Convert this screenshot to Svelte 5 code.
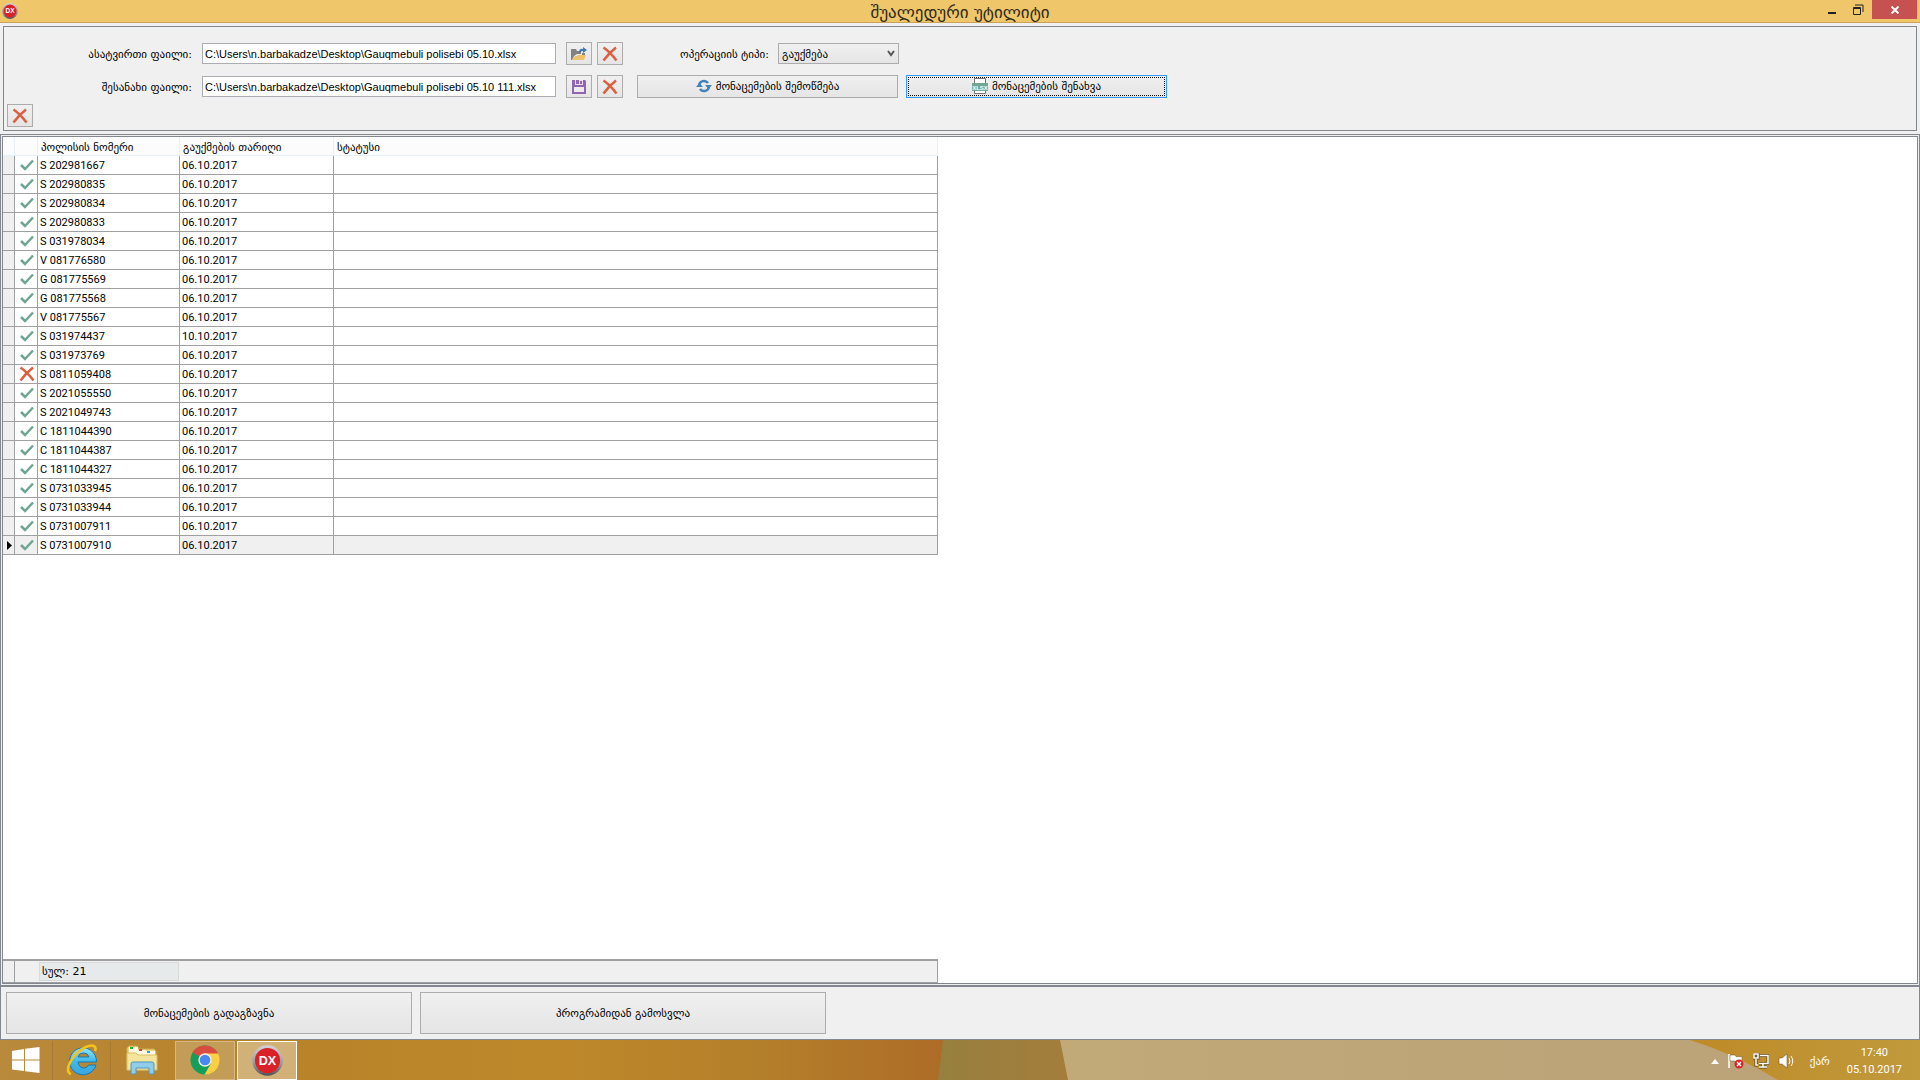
<script lang="ts">
	type Policy = { number: string; date: string; ok: boolean };

	const numbers = [
		'S 202981667',
		'S 202980835',
		'S 202980834',
		'S 202980833',
		'S 031978034',
		'V 081776580',
		'G 081775569',
		'G 081775568',
		'V 081775567',
		'S 031974437',
		'S 031973769',
		'S 0811059408',
		'S 2021055550',
		'S 2021049743',
		'C 1811044390',
		'C 1811044387',
		'C 1811044327',
		'S 0731033945',
		'S 0731033944',
		'S 0731007911',
		'S 0731007910'
	];

	const policies: Policy[] = numbers.map((number) => ({
		number,
		date: number === 'S 031974437' ? '10.10.2017' : '06.10.2017',
		ok: number !== 'S 0811059408'
	}));

	let selected = $state(policies.length - 1);
	let loadPath = $state('C:\\Users\\n.barbakadze\\Desktop\\Gauqmebuli polisebi 05.10.xlsx');
	let savePath = $state('C:\\Users\\n.barbakadze\\Desktop\\Gauqmebuli polisebi 05.10 111.xlsx');
</script>

{#snippet cross()}
	<svg class="cross" viewBox="0 0 16 16" aria-hidden="true">
		<path d="M1.5 1.5Q8 6 14.5 14.5M14 1.5Q7 7 1.5 14.5" />
	</svg>
{/snippet}

{#snippet dx()}
	<svg class="dx" viewBox="0 0 32 32" aria-hidden="true">
		<defs>
			<linearGradient id="ring" x1="0" y1="0" x2="0" y2="1">
				<stop offset="0" stop-color="#d4d4d8" />
				<stop offset="0.6" stop-color="#98989d" />
				<stop offset="1" stop-color="#505055" />
			</linearGradient>
		</defs>
		<circle cx="16" cy="16" r="15.8" fill="url(#ring)" />
		<circle cx="16" cy="16" r="13" fill="#da2128" />
		<text x="16" y="20.5" text-anchor="middle">DX</text>
	</svg>
{/snippet}

<div class="window">
	<header class="titlebar">
		<span class="app-icon">{@render dx()}</span>
		<h1>შუალედური უტილიტი</h1>
		<div class="window-buttons">
			<button aria-label="Minimize">
				<svg width="10" height="14" viewBox="0 0 10 14"><path d="M1 9h8v2H1z" fill="#222" /></svg>
			</button>
			<button aria-label="Restore">
				<svg width="12" height="12" viewBox="0 0 12 12" fill="none" stroke="#222">
					<path d="M1.5 3.5h7v7h-7zM1 4.5h8" />
					<path d="M3 1h8v7" />
				</svg>
			</button>
			<button class="close" aria-label="Close">
				<svg width="10" height="8" viewBox="0 0 10 8"><path d="M1.5 .5l7 7M8.5 .5l-7 7" stroke="#fff" stroke-width="2" /></svg>
			</button>
		</div>
	</header>

	<section class="options">
		<div class="line">
			<div class="file">
				<label for="load">ასატვირთი ფაილი:</label>
				<input id="load" type="text" bind:value={loadPath} />
				<div class="tools">
					<button class="tool" aria-label="Open">
						<svg width="16" height="14" viewBox="0 0 16 14">
							<path d="M0 2h5l1 2h4v3H6l-3 2-2 4H0z" fill="#828282" />
							<path d="M11 6h3v2h-3z" fill="#828282" />
							<path d="M4 9h2l1-1h8l-2 5H1z" fill="#eec26c" />
							<path d="M8 6q0-5 4-4V0l4 3-4 3V4q-2 0-4 2z" fill="#3e7ab8" />
						</svg>
					</button>
					<button class="tool" aria-label="Clear" onclick={() => (loadPath = '')}>{@render cross()}</button>
				</div>
			</div>
			<div class="operation">
				<label for="type">ოპერაციის ტიპი:</label>
				<div class="select">
					<select id="type">
						<option>გაუქმება</option>
					</select>
					<svg width="8" height="7" viewBox="0 0 8 7"><path d="M1 1l3 4 3-4" fill="none" stroke="#555" stroke-width="2" /></svg>
				</div>
			</div>
		</div>

		<div class="line">
			<div class="file">
				<label for="save">შესანახი ფაილი:</label>
				<input id="save" type="text" bind:value={savePath} />
				<div class="tools">
					<button class="tool" aria-label="Save">
						<svg width="14" height="14" viewBox="0 0 14 14">
							<path d="M0 0h13l1 1v13H0z" fill="#9265b0" />
							<path d="M3 0h8v5H3z" fill="#e6dcec" />
							<path d="M4 0h3v4H4zM8 1h2v3H8z" fill="#9265b0" />
							<path d="M2 7h10v5H2z" fill="#ececec" />
						</svg>
					</button>
					<button class="tool" aria-label="Clear" onclick={() => (savePath = '')}>{@render cross()}</button>
				</div>
			</div>
			<div class="actions">
				<button>
					<svg width="16" height="14" viewBox="0 0 16 14">
						<path d="M3 6.500a5 5 0 0 1 9-2.500M13 7.500a5 5 0 0 1-9 2.500" fill="none" stroke="#4381bd" stroke-width="2.5" />
						<path d="M9 6h7l-3.500 4zM0 8h7L3.500 4z" fill="#4381bd" />
					</svg>
					მონაცემების შემოწმება
				</button>
				<button class="focused">
					<svg width="16" height="16" viewBox="0 0 16 16">
						<path d="M2.5 .5h11v15h-11z" fill="#fff" stroke="#777" />
						<path d="M0 5h16v8H0z" fill="#72a794" />
						<text x="8" y="11.500" text-anchor="middle" fill="#fff" font-size="6">XLSX</text>
					</svg>
					მონაცემების შენახვა
				</button>
			</div>
		</div>

		<button class="tool" aria-label="Cancel">{@render cross()}</button>
	</section>

	<main>
		<div class="grid">
			<table>
				<colgroup>
					<col class="c-mark" />
					<col class="c-state" />
					<col class="c-number" />
					<col class="c-date" />
					<col class="c-status" />
				</colgroup>
				<thead>
					<tr>
						<th></th>
						<th></th>
						<th>პოლისის ნომერი</th>
						<th>გაუქმების თარიღი</th>
						<th>სტატუსი</th>
					</tr>
				</thead>
				<tbody>
					{#each policies as policy, i}
						<tr class:current={i === selected} onclick={() => (selected = i)}>
							<td class="mark">
								{#if i === selected}
									<svg width="5" height="9" viewBox="0 0 5 9"><path d="M0 0l5 4.5-5 4.5z" /></svg>
								{/if}
							</td>
							<td class="state">
								{#if policy.ok}
									<svg class="tick" width="14" height="12" viewBox="0 0 14 12"><path d="M1 6l4 4 8-8.5" /></svg>
								{:else}
									{@render cross()}
								{/if}
							</td>
							<td class="number">{policy.number}</td>
							<td>{policy.date}</td>
							<td></td>
						</tr>
					{/each}
				</tbody>
			</table>

			<div class="summary">
				<div class="corner"></div>
				<div class="total">სულ: {policies.length}</div>
			</div>
		</div>
	</main>

	<footer>
		<button>მონაცემების გადაგზავნა</button>
		<button>პროგრამიდან გამოსვლა</button>
	</footer>

	<nav class="taskbar">
		<svg class="wallpaper" viewBox="0 0 1920 40" preserveAspectRatio="none" aria-hidden="true">
			<defs>
				<linearGradient id="wood">
					<stop offset="0" stop-color="#b98a3c" />
					<stop offset="0.25" stop-color="#b88229" />
					<stop offset="0.6" stop-color="#bd872a" />
					<stop offset="0.8" stop-color="#b47f2a" />
					<stop offset="1" stop-color="#ad6b27" />
				</linearGradient>
				<linearGradient id="olive">
					<stop offset="0" stop-color="#97803f" />
					<stop offset="1" stop-color="#a47d3b" />
				</linearGradient>
				<linearGradient id="sand">
					<stop offset="0" stop-color="#c2a978" />
					<stop offset="1" stop-color="#bba278" />
				</linearGradient>
				<linearGradient id="gold">
					<stop offset="0" stop-color="#bf8a27" />
					<stop offset="1" stop-color="#c09a3c" />
				</linearGradient>
			</defs>
			<path d="M0 0h950v40H0z" fill="url(#wood)" />
			<path d="M943 0h130v40H938z" fill="url(#olive)" />
			<path d="M1060 0h740v40h-732z" fill="url(#sand)" />
			<path d="M1690 0h230v40h-142Q1735 14 1690 0z" fill="url(#gold)" />
		</svg>

		<div class="apps">
			<button class="start" aria-label="Start">
				<svg width="28" height="26" viewBox="0 0 28 26" fill="#fff">
					<path d="M0 4l12-2v10.5H0zM13 1.8L27.5 0v12.5H13zM0 13.5h12V24L0 22.5zM13 13.5h14.5V26L13 24.2z" />
				</svg>
			</button>
			<button aria-label="Internet Explorer">
				<svg width="32" height="32" viewBox="0 0 32 32">
					<defs>
						<linearGradient id="ie" x1="0" y1="0" x2="0" y2="1">
							<stop offset="0" stop-color="#8fe6fb" />
							<stop offset="0.5" stop-color="#3db9ea" />
							<stop offset="1" stop-color="#3ba6df" />
						</linearGradient>
					</defs>
					<path d="M30 21A13.5 13.5 0 1 1 30.5 18H12q1 6 6 6 3 0 4.5-3zM12 13h11q-1-4-5.5-4T12 13z" fill="url(#ie)" stroke="#1878ae" />
					<path d="M5 30C-3 28 6 9 20 3c7-3 11-1 9 4" fill="none" stroke="#f6c31c" stroke-width="2.5" />
				</svg>
			</button>
			<button class="explorer" aria-label="File Explorer">
				<svg width="32" height="30" viewBox="0 0 32 30">
					<path d="M1 3l2-2h8l2 3h15l2 2v19H1z" fill="#eed580" stroke="#cba84b" />
					<path d="M3 2h9v3h8v1h9v4H3z" fill="#fffbe2" />
					<path d="M4 2h3v2H4z" fill="#1db32a" />
					<path d="M13 4h3v2h-3z" fill="#d2442c" />
					<path d="M21 6h3v2h-3z" fill="#2f9cd8" />
					<path d="M1 8h9l2 2h19v15H1z" fill="#f5e49b" stroke="#d9bd66" />
					<path d="M5 29V19q0-2 2-2h19q2 0 2 2v10h-5v-6H10v6z" fill="#8fcdeb" stroke="#4a98c4" />
				</svg>
			</button>
			<button class="running" aria-label="Chrome">
				<svg width="30" height="30" viewBox="0 0 30 30">
					<circle cx="15" cy="15" r="14.5" fill="#159e5a" />
					<path d="M15 15L2.5 7.5A14.5 14.5 0 0 1 28 8.5z" fill="#d94c40" />
					<path d="M15 8.5h13.2A14.5 14.5 0 0 1 14.5 29.5l6.5-11z" fill="#fdcd42" />
					<circle cx="15" cy="15" r="6.7" fill="#f4f1e9" />
					<circle cx="15" cy="15" r="5.3" fill="#4a87ee" />
				</svg>
			</button>
			<button class="running active" aria-label="DX">{@render dx()}</button>
		</div>

		<div class="tray">
			<svg width="8" height="5" viewBox="0 0 8 5"><path d="M0 5l4-5 4 5z" fill="#fff" /></svg>
			<svg width="16" height="16" viewBox="0 0 16 16">
				<path d="M1 1v14" stroke="#fff" stroke-width="1.5" />
				<path d="M2 2h5l1 1.5h6V9H8L7 8H2z" fill="#fff" stroke="#6b5318" stroke-width=".5" />
				<circle cx="11" cy="11" r="4.5" fill="#d8232a" />
				<path d="M9 9l4 4M13 9l-4 4" stroke="#fff" stroke-width="1.5" />
			</svg>
			<svg width="16" height="16" viewBox="0 0 16 16" fill="none">
				<path d="M7 2.5h8v8H6M10 10v4M6 14h8M3 6v6h2M1 1h4v4H1z" stroke="#5e4a1c" stroke-width="3" />
				<path d="M7 2.5h8v8H6M10 10v4M6 14h8M3 6v6h2M1 1h4v4H1z" stroke="#fff" stroke-width="1.5" />
			</svg>
			<svg width="17" height="16" viewBox="0 0 17 16">
				<path d="M1 5h3l5-4v14l-5-4H1z" fill="#fff" stroke="#5e4a1c" stroke-width=".5" />
				<path d="M11 5q2 3 0 6M13 3q3.5 5 0 10" fill="none" stroke="#fff" />
			</svg>
			<span class="lang">ქარ</span>
			<time class="clock"><span>17:40</span><span>05.10.2017</span></time>
		</div>
	</nav>
</div>

<style>
	:global(body) {
		background: #f0f0f0;
	}

	.window {
		display: flex;
		flex-direction: column;
		min-height: 100vh;
		background: #f0f0f0;
		color: #000;
		font: 11px/15px 'DejaVu Sans', sans-serif;
	}

	.window * {
		box-sizing: border-box;
	}

	button,
	input,
	select {
		margin: 0;
		padding: 0;
		border: 0;
		border-radius: 0;
		color: inherit;
		font: inherit;
	}

	svg {
		display: block;
		flex: none;
	}

	/* title bar */
	.titlebar {
		display: grid;
		grid-template-columns: 1fr auto 1fr;
		height: 23px;
		border-bottom: 1px solid #c9a458;
		background: #efc76a;
	}

	.app-icon {
		padding: 3px 2px;
	}

	.app-icon .dx {
		width: 16px;
		height: 16px;
	}

	h1 {
		margin: 0;
		color: #2e2a1c;
		font: 17px/24px 'DejaVu Sans', sans-serif;
	}

	.window-buttons {
		display: flex;
		justify-content: flex-end;
		padding-right: 3px;
	}

	.window-buttons button {
		display: flex;
		justify-content: center;
		align-items: center;
		width: 26px;
		height: 19px;
		background: none;
	}

	.window-buttons .close {
		width: 45px;
		margin-left: 1px;
		background: #c75050;
	}

	.dx text {
		fill: #fff;
		font: bold 13px 'Liberation Sans', sans-serif;
	}

	/* file and operation options */
	.options {
		display: flex;
		flex-direction: column;
		gap: 10px;
		margin: 3px;
		padding: 15px 3px 3px;
		border: 1px solid #828790;
	}

	.line,
	.file,
	.tools,
	.operation,
	.actions {
		display: flex;
		align-items: center;
	}

	.line {
		gap: 14px;
	}

	.file {
		gap: 10px;
	}

	.operation {
		gap: 9px;
	}

	.file label {
		width: 185px;
		text-align: right;
	}

	.file input {
		width: 354px;
		height: 21px;
		padding: 0 2px;
		border: 1px solid #abadb3;
		background: #fff;
		font-family: 'Liberation Sans', sans-serif;
	}

	label {
		padding-top: 1px;
	}

	.tools {
		gap: 5px;
	}

	.tool,
	.actions button,
	footer button,
	select {
		border: 1px solid #acacac;
		background: linear-gradient(#f0f0f0, #e5e5e5);
	}

	.tool {
		display: flex;
		justify-content: center;
		align-items: center;
		width: 26px;
		height: 23px;
	}

	.options > .tool {
		margin-top: -4px;
	}

	.cross {
		width: 16px;
		height: 16px;
		fill: none;
		stroke: #dc5f3f;
		stroke-width: 2.5;
	}

	.operation label {
		width: 132px;
		text-align: right;
	}

	.select {
		position: relative;
	}

	.select svg {
		position: absolute;
		top: 7px;
		right: 4px;
		pointer-events: none;
	}

	select {
		width: 121px;
		height: 21px;
		padding: 1px 0 0 3px;
		appearance: none;
	}

	.actions {
		gap: 8px;
	}

	.actions button {
		display: flex;
		justify-content: center;
		align-items: center;
		gap: 4px;
		width: 261px;
		height: 23px;
		padding-bottom: 1px;
	}

	.actions .focused {
		border-color: #3399ff;
		outline: 1px dotted #000;
		outline-offset: -3px;
	}

	.actions text {
		font-family: 'Liberation Sans', sans-serif;
		font-weight: bold;
	}

	/* policy grid */
	main {
		display: flex;
		flex: 1;
		padding: 1px;
		border: 1px solid #828790;
	}

	.grid {
		display: flex;
		flex: 1;
		flex-direction: column;
		justify-content: space-between;
		align-items: flex-start;
		border: 1px solid #828790;
		background: #fff;
	}

	table {
		width: 935px;
		border-spacing: 0;
		table-layout: fixed;
	}

	.c-mark {
		width: 12px;
	}

	.c-state {
		width: 23px;
	}

	.c-number {
		width: 142px;
	}

	.c-date {
		width: 154px;
	}

	th {
		height: 19px;
		padding: 2px 3px 0;
		border-right: 1px solid #e5f0f8;
		border-bottom: 1px solid #e5f0f8;
		background: #fcfcfc;
		font-weight: normal;
		text-align: left;
	}

	td {
		height: 19px;
		padding: 1px 0 0 2px;
		border-right: 1px solid #a0a0a0;
		border-bottom: 1px solid #a0a0a0;
		font-family: Roboto, sans-serif;
		line-height: 17px;
	}

	.mark {
		background: #f0f0f0;
	}

	.mark svg {
		margin-left: 2px;
	}

	.state {
		padding: 0 0 0 1px;
	}

	.state svg {
		margin: 0 auto;
	}

	.tick {
		fill: none;
		stroke: #6fa594;
		stroke-width: 2.5;
	}

	.current td {
		background: #f0f0f0;
	}

	.current .number {
		background: #fff;
	}

	.summary {
		display: flex;
		width: 935px;
		height: 24px;
		border: solid #a0a0a0;
		border-width: 2px 1px 1px 0;
		background: #f0f0f0;
	}

	.corner {
		width: 12px;
		border-right: 1px solid #a0a0a0;
	}

	.total {
		width: 140px;
		margin: 1px 0 1px 24px;
		padding-left: 2px;
		border: 1px solid #d8dadb;
		background: #e6eaeb;
		line-height: 18px;
	}

	/* bottom buttons */
	footer {
		display: flex;
		gap: 8px;
		padding: 5px;
		border: 1px solid #828790;
	}

	footer button {
		width: 406px;
		height: 42px;
	}

	/* taskbar */
	.taskbar {
		position: relative;
		display: flex;
		justify-content: space-between;
		height: 40px;
		color: #fff;
	}

	.wallpaper {
		position: absolute;
		width: 100%;
		height: 100%;
	}

	.apps,
	.tray {
		position: relative;
		display: flex;
		align-items: center;
	}

	.apps button {
		display: flex;
		justify-content: center;
		align-items: center;
		width: 58px;
		height: 39px;
		border-right: 1px solid #a47a35;
		background: none;
	}

	.apps .start {
		width: 53px;
	}

	.apps .explorer {
		width: 62px;
		border: 0;
	}

	.apps .running {
		width: 60px;
		margin-left: 2px;
		border: 1px solid #d8b880;
		background: #c39c58;
	}

	.apps .active {
		border-color: #fff;
		background: #d2b179;
	}

	.apps .dx {
		width: 31px;
		height: 31px;
	}

	.tray {
		gap: 9px;
		padding: 2px 18px 0 0;
	}

	.lang {
		margin: 0 8px 0 6px;
	}

	.clock {
		display: flex;
		flex-direction: column;
		align-items: center;
		font-family: Roboto, sans-serif;
		line-height: 17px;
	}
</style>
